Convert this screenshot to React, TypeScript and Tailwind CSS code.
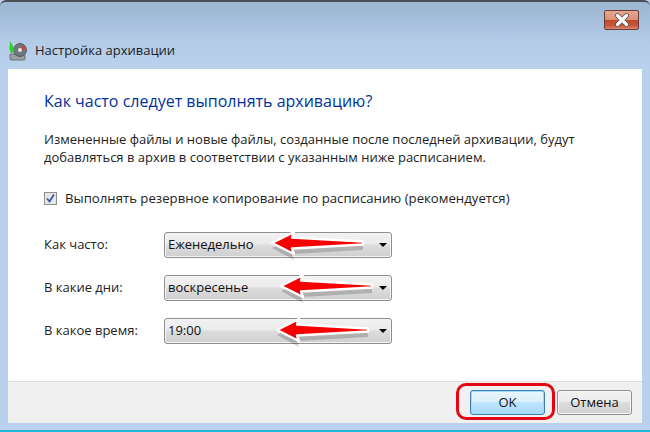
import React from 'react';

const Arrow = ({ className }: { className: string }) => (
  <svg className={`absolute ${className}`} width="104" height="34" viewBox="0 0 104 34">
    <defs>
      <linearGradient id="arrowFill" x1="0" y1="0" x2="0" y2="1">
        <stop offset="0" stopColor="#ff0000" />
        <stop offset="0.65" stopColor="#f40000" />
        <stop offset="1" stopColor="#c00000" />
      </linearGradient>
    </defs>
    <path d="M6 19 L28 8 L26 15 L97 17 L97 21 L26 25 L28 31 Z" fill="#000" opacity="0.18" transform="translate(0 2)" />
    <path d="M6 16 L28 5 L26 10.5 L97 14.5 L97 17.5 L26 21.5 L28 27 Z" fill="url(#arrowFill)" stroke="#fff" strokeWidth="2.4" strokeLinejoin="round" />
  </svg>
);

const Select = ({ value }: { value: string }) => (
  <div className="w-[228px] h-[26px] rounded-[3px] border border-[#8e8f8f] bg-[linear-gradient(#f2f2f2_0%,#ebebeb_45%,#dddddd_50%,#cfcfcf_100%)] shadow-[inset_0_0_0_1px_#f4f4f4] flex items-center justify-between pl-[3px] pr-[4px] text-[13px] text-[#111]">
    <span>{value}</span>
    <span className="w-0 h-0 border-x-[4px] border-x-transparent border-t-[4px] border-t-black" />
  </div>
);

const Row = ({ label, value }: { label: string; value: string }) => (
  <div className="flex items-center">
    <div className="w-[120px] text-[13px] text-[#222]">{label}</div>
    <Select value={value} />
  </div>
);

export default function App() {
  return (
    <div className="relative w-[650px] h-[432px] overflow-hidden bg-[#b9d1ec] font-['Open_Sans','Noto_Sans',sans-serif]">
      <div className="h-[69px] border-t-2 border-[#4a4f55] rounded-t-[6px] bg-[linear-gradient(#9cb6d2_0%,#a5bedb_25%,#b4cce8_60%,#b9d1ec_100%)] flex justify-between pl-[8px] pr-[11px]">
        <div className="flex items-center gap-[7px] pt-[30px]">
          <svg width="20" height="20" viewBox="0 0 20 20">
            <rect x="2" y="13" width="15" height="6" rx="1" fill="#9a9ea5" stroke="#555" strokeWidth="0.7" />
            <circle cx="12" cy="9" r="6.5" fill="#6f7680" stroke="#444" strokeWidth="0.7" />
            <circle cx="12" cy="9" r="2" fill="#dfe5ea" />
            <path d="M14 4 L18 7 L14 10 Z" fill="#c9473a" />
            <path d="M2 0 L5 5 L6.5 9 L3 13 L1.5 8 Z" fill="#2fd02c" />
          </svg>
          <span className="text-[13px] text-[#1c1c1c]">Настройка архивации</span>
        </div>
        <div className="relative mt-[8px] w-[35px] h-[20px] rounded-[2px] border border-[#6b3a3a] bg-[linear-gradient(#e9a793_0%,#dc8f78_48%,#c1492b_50%,#c8553a_80%,#d98a70_100%)]">
          <svg className="absolute left-[10px] top-[2px]" width="14" height="14" viewBox="0 0 14 14">
            <path d="M2.5 2.5 L11.5 11.5 M11.5 2.5 L2.5 11.5" stroke="#4c4c4c" strokeWidth="4.6" strokeLinecap="round" />
            <path d="M2.5 2.5 L11.5 11.5 M11.5 2.5 L2.5 11.5" stroke="#fff" strokeWidth="3.2" strokeLinecap="round" />
          </svg>
        </div>
      </div>

      <div className="mx-[8px] h-[354px] bg-white flex flex-col">
        <div className="h-[312px] pl-[36px] pt-[20px] flex flex-col">
          <h1 className="text-[16px] leading-[24px] text-[#003399]">Как часто следует выполнять архивацию?</h1>
          <p className="mt-[17px] text-[13px] leading-[18px] text-[#222]">
            Измененные файлы и новые файлы, созданные после последней архивации, будут
            <br />
            добавляться в архив в соответствии с указанным ниже расписанием.
          </p>
          <div className="mt-[23px] flex items-center gap-[8px]">
            <div className="w-[13px] h-[13px] border border-[#8e8f8f] bg-[#e4e6ea] flex items-center justify-center">
              <svg width="11" height="11" viewBox="0 0 11 11">
                <path d="M2 5.5 L4.5 8.5 L9 1.5" fill="none" stroke="#3d5a9e" strokeWidth="1.8" />
              </svg>
            </div>
            <span className="text-[13.2px] text-[#222]">Выполнять резервное копирование по расписанию (рекомендуется)</span>
          </div>
          <div className="mt-[23px] flex flex-col gap-[17px]">
            <Row label="Как часто:" value="Еженедельно" />
            <Row label="В какие дни:" value="воскресенье" />
            <Row label="В какое время:" value="19:00" />
          </div>
        </div>
        <div className="flex-1 bg-[#f0f0f0] border-t border-[#dfdfdf] flex justify-end items-start gap-[12px] pt-[8px] pr-[10px]">
          <div className="w-[75px] h-[25px] rounded-[3px] border border-[#3c7fb1] bg-[linear-gradient(#eaf6fd_0%,#d9f0fc_48%,#bee6fd_50%,#a7d9f5_100%)] shadow-[inset_0_0_0_1px_#9fdcf5] flex items-center justify-center text-[13px] text-[#111]">OK</div>
          <div className="w-[75px] h-[25px] rounded-[3px] border border-[#8e8f8f] bg-[linear-gradient(#f2f2f2_0%,#ebebeb_48%,#dddddd_50%,#cfcfcf_100%)] shadow-[inset_0_0_0_1px_#f7f7f7] flex items-center justify-center text-[13px] text-[#111]">Отмена</div>
        </div>
      </div>
      <div className="absolute left-0 bottom-0 w-full h-[2px] bg-[#1fb8d8]" />

      <Arrow className="left-[266px] top-[227px]" />
      <Arrow className="left-[275px] top-[270px]" />
      <Arrow className="left-[271px] top-[314px]" />
      <div className="absolute left-[456px] top-[383px] w-[99px] h-[37px] rounded-[10px] border-[3px] border-[#e30613]" />
    </div>
  );
}
